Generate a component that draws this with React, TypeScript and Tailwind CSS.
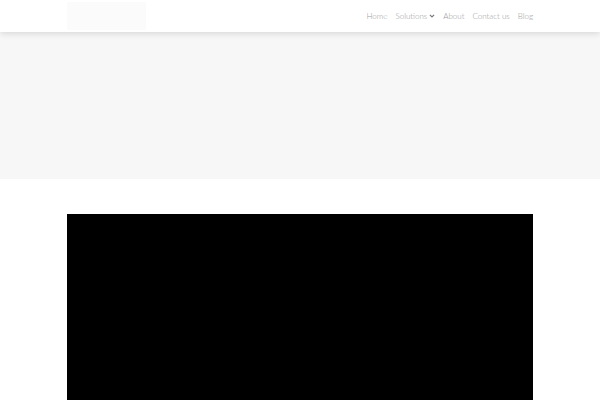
import React from 'react';

const links = ['Home', 'Solutions', 'About', 'Contact us', 'Blog'];

export default function App() {
  return (
    <div className="min-h-screen bg-white font-['Lato',sans-serif]">
      <header className="relative z-10 h-[32px] bg-white shadow-[0_2px_6px_rgba(0,0,0,0.12)]">
        <div className="mx-auto flex h-full w-[466px] items-center justify-between">
          <div className="h-[28px] w-[79px] bg-[#fbfbfb]" />
          <nav className="flex items-center gap-[8px] text-[8px] font-light text-[#9a9a9a]">
            {links.map(l => (
              <span key={l} className="flex items-center gap-[2px]">
                {l}
                {l === 'Solutions' && (
                  <svg width="6" height="6" viewBox="0 0 10 10">
                    <path d="M1.5 3 L5 6.5 L8.5 3" fill="none" stroke="#7a7a7a" strokeWidth="2" />
                  </svg>
                )}
              </span>
            ))}
          </nav>
        </div>
      </header>
      <section className="h-[147px] bg-[#f7f7f7]" />
      <main className="pt-[35px]">
        <div className="mx-auto h-[186px] w-[466px] bg-black" />
      </main>
    </div>
  );
}
